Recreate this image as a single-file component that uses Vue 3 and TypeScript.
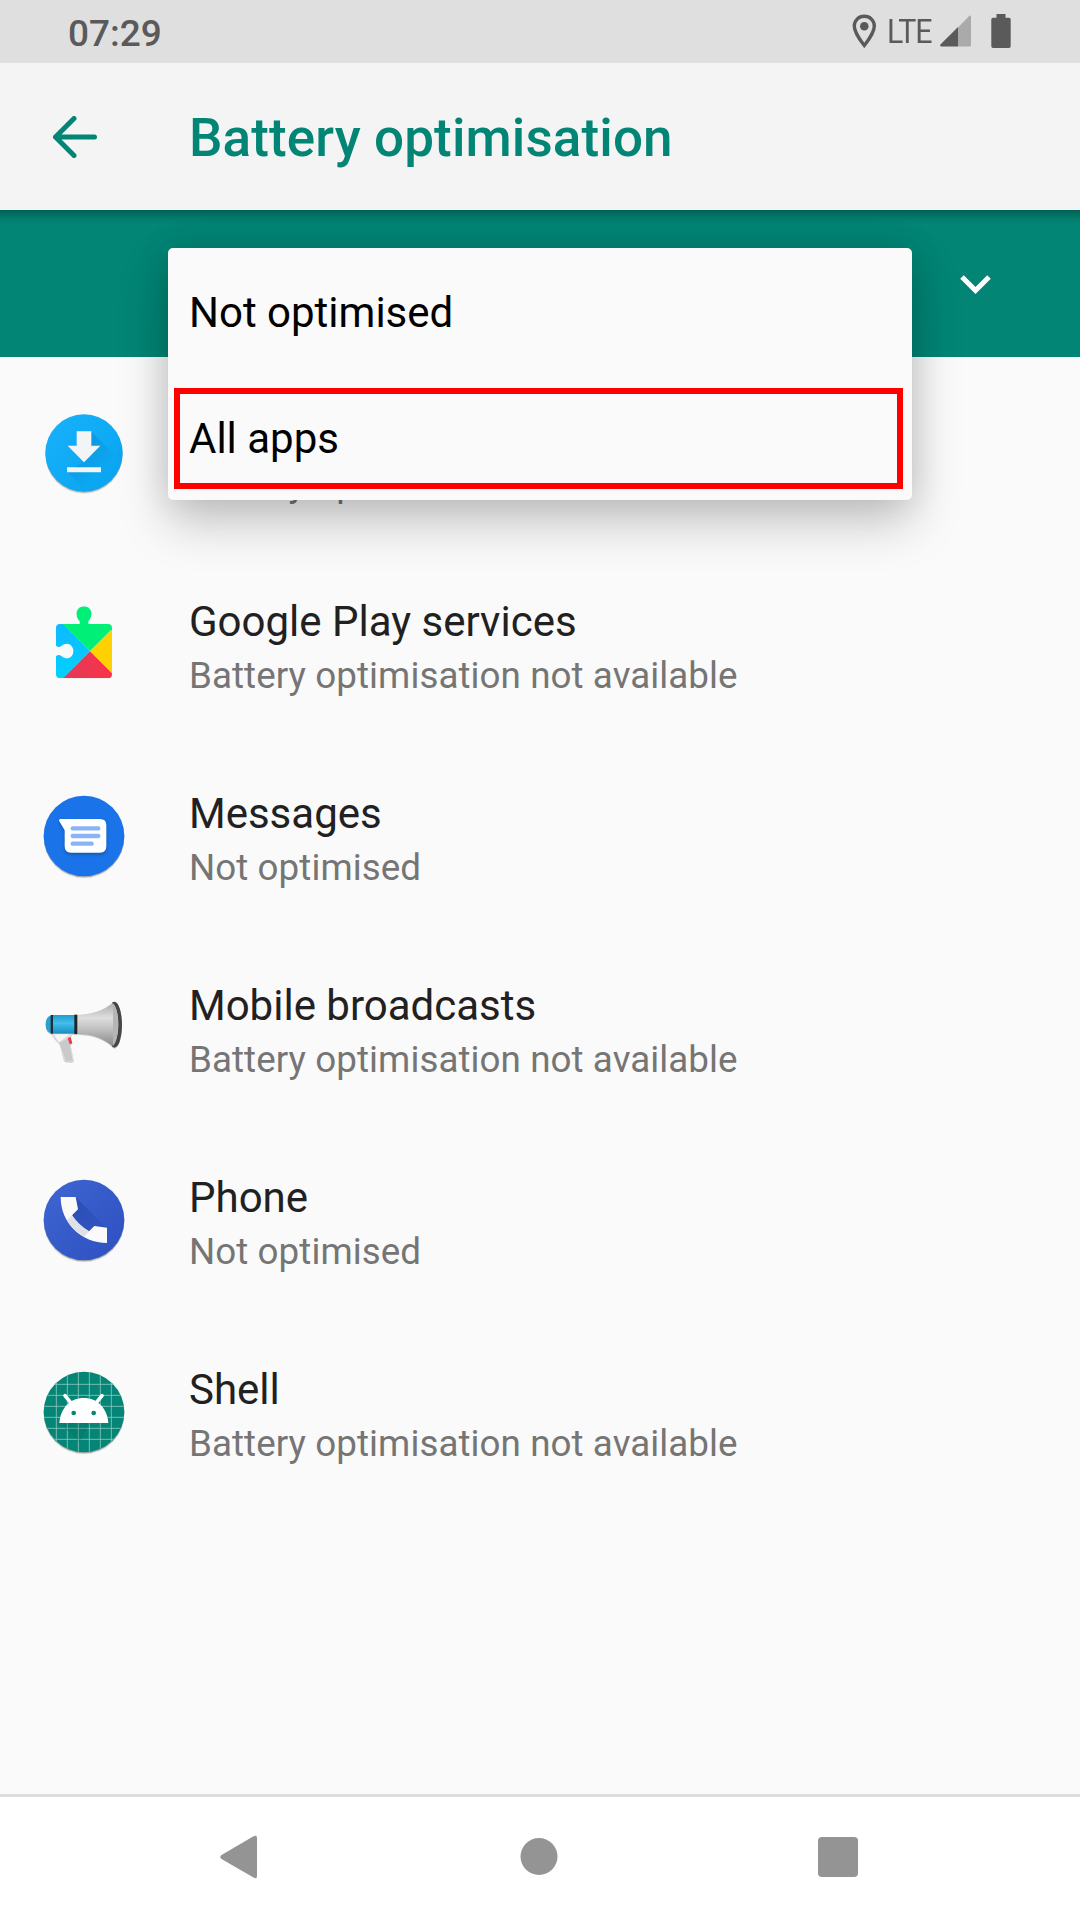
<script setup lang="ts">
interface AppRow {
  icon: 'download' | 'play' | 'messages' | 'broadcast' | 'phone' | 'shell'
  title: string
  status: string
}

const unavailable = 'Battery optimisation not available'

const rows: AppRow[] = [
  { icon: 'download', title: '', status: unavailable },
  { icon: 'play', title: 'Google Play services', status: unavailable },
  { icon: 'messages', title: 'Messages', status: 'Not optimised' },
  { icon: 'broadcast', title: 'Mobile broadcasts', status: unavailable },
  { icon: 'phone', title: 'Phone', status: 'Not optimised' },
  { icon: 'shell', title: 'Shell', status: unavailable },
]
</script>

<template>
  <div class="screen">
    <header class="status-bar">
      <span class="clock">07:29</span>
      <div class="status-icons">
        <svg class="pin" width="24" height="34" viewBox="0 0 24 34">
          <path d="M12.300 2.300C6.600 2.300 2.300 6.600 2.300 12C2.300 19 12.300 31.500 12.300 31.500C12.300 31.500 22.300 19 22.300 12C22.300 6.600 18 2.300 12.300 2.300Z" fill="none" stroke="#5a5a5a" stroke-width="3.400" />
          <circle cx="12.300" cy="12.300" r="4.300" fill="#5a5a5a" />
        </svg>
        <span class="lte">LTE</span>
        <svg class="signal" width="31" height="32" viewBox="0 0 31 32">
          <path d="M18 12.500L29 1.200Q31 -.3 31 2V30Q31 31.500 29.500 31.500H18Z" fill="#aaa" />
          <path d="M18 12V31.500H1.500Q-.8 31.200 .7 29.200Z" fill="#5a5a5a" />
        </svg>
        <svg class="battery" width="20" height="34" viewBox="0 0 20 34">
          <path d="M5.500 0H14.500V3.700H18Q19.700 3.700 19.700 5.400V32.300Q19.700 34 18 34H2Q.3 34 .3 32.300V5.400Q.3 3.700 2 3.700H5.500Z" fill="#5a5a5a" />
        </svg>
      </div>
    </header>

    <div class="app-bar">
      <svg class="back" width="46" height="42" viewBox="0 0 46 42">
        <path d="M22 2.500L3.500 21L22 39.500M3.500 21H42.500" fill="none" stroke="#028575" stroke-width="5" stroke-linecap="round" stroke-linejoin="round" />
      </svg>
      <h1>Battery optimisation</h1>
    </div>

    <div class="filter-bar">
      <svg class="chevron" width="32" height="20" viewBox="0 0 32 20">
        <path d="M2 2L15.500 15.500L29 2" fill="none" stroke="#fff" stroke-width="5" />
      </svg>
      <div class="menu">
        <div class="menu-item">Not optimised</div>
        <div class="menu-item">All apps<span class="marker"></span></div>
      </div>
    </div>

    <main class="list">
      <div v-for="row in rows" :key="row.icon" class="row">
        <svg v-if="row.icon === 'download'" class="icon" viewBox="0 -6 330 330">
          <defs>
            <linearGradient id="dl" x1="0" y1="0" x2="1" y2="1"><stop stop-color="#18b2fb" /><stop offset="1" stop-color="#08a3ef" /></linearGradient>
            <linearGradient id="dls" gradientUnits="userSpaceOnUse" x1="160" y1="150" x2="220" y2="210"><stop stop-color="#0680c0" stop-opacity=".4" /><stop offset="1" stop-color="#0680c0" stop-opacity="0" /></linearGradient>
            <clipPath id="dlc"><circle cx="162" cy="159" r="116" /></clipPath>
          </defs>
          <circle class="cast" cx="162" cy="159" r="116" fill="url(#dl)" />
          <path d="M184 95L300 211V300H198L112 215L160 187Z" fill="url(#dls)" clip-path="url(#dlc)" />
          <path d="M140 94H184V137H211L162 187L113 137H140ZM111 202H213V217H111Z" fill="#f3f4f5" />
        </svg>

        <svg v-else-if="row.icon === 'play'" class="icon" viewBox="0 0 330 330">
          <defs>
            <clipPath id="puzzle"><path d="M90 102H149V94C132 76 139 49 162 49C185 49 192 76 175 94V102H234Q246 102 246 114V253Q246 265 234 265H90Q78 265 78 253V199Q86 191 94 198C111 213 130 202 130 183C130 164 111 153 94 168Q86 175 78 167V114Q78 102 90 102Z" /></clipPath>
            <linearGradient id="pb" x1="0" y1="0" x2="0" y2="1"><stop stop-color="#11b4ff" /><stop offset="1" stop-color="#00d4ff" /></linearGradient>
            <linearGradient id="pr" x1="0" y1="0" x2="1" y2="0"><stop stop-color="#e03a5c" /><stop offset="1" stop-color="#fb3344" /></linearGradient>
          </defs>
          <g clip-path="url(#puzzle)">
            <path d="M70 73L180 184L90 275H70Z" fill="url(#pb)" />
            <path d="M70 40H260V104L180 184L94 99Z" fill="#00ef76" />
            <path d="M260 104V264L180 184Z" fill="#ffd100" />
            <path d="M180 184L260 264V275H89Z" fill="url(#pr)" />
          </g>
        </svg>

        <svg v-else-if="row.icon === 'messages'" class="icon" viewBox="0 6 330 330">
          <circle class="cast" cx="162" cy="168" r="121" fill="#1a73e8" />
          <path class="soft" d="M92 117H210Q229 117 229 136V199Q229 218 210 218H123Q104 218 104 199V151L88 124Q85 117 92 117Z" fill="#fff" />
          <path d="M128 145H205M128 168H205M128 191H185" stroke="#8ab4f8" stroke-width="13" stroke-linecap="round" />
        </svg>

        <svg v-else-if="row.icon === 'broadcast'" class="icon" viewBox="0 -18 330 330">
          <defs>
            <linearGradient id="horn" x1="0" y1="0" x2="0" y2="1"><stop stop-color="#aaa" /><stop offset=".35" stop-color="#dedede" /><stop offset=".6" stop-color="#c0c0c0" /><stop offset="1" stop-color="#858585" /></linearGradient>
            <linearGradient id="body" x1="0" y1="0" x2="0" y2="1"><stop stop-color="#209cd0" /><stop offset=".45" stop-color="#43bdec" /><stop offset="1" stop-color="#168ec2" /></linearGradient>
          </defs>
          <g class="faint">
            <path d="M65 161H126L119 181L131 239Q132 245 126 245L107 244Q103 243 101 238L89 190Q75 180 65 161Z" fill="#dedede" />
            <path d="M72 163H119L86 187Z" fill="#f5f5f5" />
            <path d="M88 188L116 174L128 242L107 242Z" fill="#c9c9c9" />
            <path d="M113 174L122 171L127 190L119 193Z" fill="#f2384d" />
            <path d="M66 105Q47 109 47 133Q47 157 66 161Z" fill="#2b9fce" />
            <path d="M68 105H135V161H68Z" fill="url(#body)" />
            <path d="M62 105H69V161H62Z" fill="#1d3039" />
            <path d="M142 105C188 103 220 92 250 67V201C220 173 188 163 142 161Z" fill="url(#horn)" />
            <path d="M133 104H142V162H133Z" fill="#202427" />
            <path d="M246 68C253 61 264 65 270 88C278 116 278 155 270 181C264 203 253 207 246 199C260 187 265 160 265 133C265 106 260 80 246 68Z" fill="#464646" />
            <path d="M249 70Q264 85 264 133Q264 182 249 198Z" fill="#b5b5b5" />
          </g>
        </svg>

        <svg v-else-if="row.icon === 'phone'" class="icon" viewBox="0 3 330 330">
          <defs>
            <linearGradient id="ph" x1="0" y1="0" x2="1" y2="1"><stop stop-color="#3f66d2" /><stop offset="1" stop-color="#2d50c0" /></linearGradient>
            <linearGradient id="phs" gradientUnits="userSpaceOnUse" x1="150" y1="120" x2="245" y2="215"><stop stop-color="#213f9f" stop-opacity=".5" /><stop offset="1" stop-color="#213f9f" stop-opacity="0" /></linearGradient>
            <clipPath id="phc"><circle cx="162" cy="165" r="121" /></clipPath>
          </defs>
          <circle class="cast" cx="162" cy="165" r="121" fill="url(#ph)" />
          <path d="M137 96L300 259V300H297L231 234L177 200L126 151L144 133Z" fill="url(#phs)" clip-path="url(#phc)" />
          <path d="M92 96H137L144 133L126 151Q146 182 177 199L193 183L231 188V234C154 234 92 174 92 96Z" fill="#fafafa" />
          <path d="M126 151Q146 182 177 199L162 215Q128 196 111 166Z" fill="#dfe1e6" />
        </svg>

        <svg v-else class="icon" viewBox="0 9 330 330">
          <defs><clipPath id="sh"><circle cx="162" cy="171" r="121" /></clipPath></defs>
          <circle class="cast" cx="162" cy="171" r="121" fill="#058575" />
          <g clip-path="url(#sh)">
            <path d="M79 40V300M112 40V300M145 40V300M178 40V300M211 40V300M244 40V300M30 88H300M30 121H300M30 154H300M30 187H300M30 220H300M30 253H300" stroke="#8cc8bf" stroke-width="2.500" />
            <path d="M88 204H180L150 262Z" fill="#046a5e" opacity=".25" />
          </g>
          <path d="M88 204C91 160 120 129 161 129C202 129 232 160 235 204Z" fill="#fff" />
          <path d="M105 122L124 145M216 122L197 145" stroke="#fff" stroke-width="11" stroke-linecap="round" />
          <circle cx="131" cy="174" r="7" fill="#058575" />
          <circle cx="191" cy="174" r="7" fill="#058575" />
        </svg>

        <div class="text">
          <div class="title">{{ row.title }}</div>
          <div class="sub">{{ row.status }}</div>
        </div>
      </div>
    </main>

    <nav class="nav-bar">
      <svg width="38" height="44" viewBox="0 0 38 44"><path d="M33.500 1.200Q37 -.5 37 3V41Q37 44.500 33.500 42.500L1.500 24Q-1 22 1.500 20Z" fill="#949494" /></svg>
      <svg width="40" height="38" viewBox="0 0 40 38"><circle cx="21" cy="18.500" r="18.500" fill="#949494" /></svg>
      <svg width="40" height="40" viewBox="0 0 40 40"><rect width="40" height="40" rx="4" fill="#949494" /></svg>
    </nav>
  </div>
</template>

<style>
body {
  margin: 0;
}
</style>

<style scoped>
.screen {
  width: 1080px;
  height: 1920px;
  display: flex;
  flex-direction: column;
  background: #fafafa;
  font-family: Roboto, "Noto Sans", sans-serif;
  overflow: hidden;
}

svg {
  display: block;
  flex: none;
}

.status-bar {
  box-sizing: border-box;
  height: 63px;
  padding: 0 69px 0 68px;
  display: flex;
  justify-content: space-between;
  background: #dfdfdf;
  color: #5a5a5a;
}

.clock {
  padding-top: 2px;
  line-height: 63px;
  font-size: 37px;
  font-weight: 500;
}

.status-icons {
  display: flex;
  align-items: flex-start;
}

.pin {
  margin: 14px 11px 0 0;
}

.lte {
  width: 53px;
  font-size: 33px;
  line-height: 63px;
  letter-spacing: -1.2px;
  transform: scaleX(0.92);
  transform-origin: left;
}

.signal {
  margin-top: 15px;
}

.battery {
  margin: 14px 0 0 20px;
}

.app-bar {
  box-sizing: border-box;
  height: 147px;
  padding-left: 52px;
  display: flex;
  align-items: center;
  background: #f4f4f4;
}

h1 {
  margin: 3px 0 0 91px;
  font-size: 53px;
  font-weight: 500;
  line-height: 62px;
  letter-spacing: 0.12px;
  color: #028575;
}

.filter-bar {
  box-sizing: border-box;
  position: relative;
  z-index: 2;
  height: 147px;
  padding: 65px 88px 0 0;
  display: flex;
  justify-content: flex-end;
  background: #028575;
}

.filter-bar::before {
  content: "";
  position: absolute;
  inset: 0 0 auto;
  height: 14px;
  background: linear-gradient(rgba(0, 0, 0, 0.27), rgba(0, 0, 0, 0.08) 60%, rgba(0, 0, 0, 0));
}

.menu {
  position: absolute;
  left: 168px;
  top: 38px;
  box-sizing: border-box;
  width: 744px;
  height: 252px;
  padding-top: 2px;
  background: #fafafa;
  border-radius: 5px;
  box-shadow: 0 22px 50px rgba(0, 0, 0, 0.22), 0 0 34px rgba(0, 0, 0, 0.1);
}

.menu-item {
  position: relative;
  height: 126px;
  padding-left: 21px;
  font-size: 42px;
  line-height: 126px;
  color: #000;
}

.marker {
  position: absolute;
  left: 6px;
  top: 12px;
  box-sizing: border-box;
  width: 729px;
  height: 101px;
  border: 6px solid #f00;
}

.list {
  flex: 1;
}

.row {
  height: 192px;
  padding-left: 30px;
  display: flex;
}

.icon {
  width: 110px;
  height: 110px;
  margin: 41px 49px 0 0;
}

.cast {
  filter: drop-shadow(0 4px 2px rgba(0, 0, 0, 0.3));
}

.soft {
  filter: drop-shadow(0 5px 4px rgba(0, 0, 0, 0.25));
}

.faint {
  filter: drop-shadow(0 3px 2px rgba(0, 0, 0, 0.2));
}

.text {
  padding-top: 47px;
  white-space: nowrap;
}

.title {
  height: 52px;
  font-size: 42px;
  line-height: 52px;
  color: #212121;
}

.sub {
  margin-top: 4px;
  font-size: 36.75px;
  line-height: 48px;
  letter-spacing: 0.07px;
  color: #757575;
}

.nav-bar {
  box-sizing: border-box;
  height: 126px;
  padding: 0 222px 4px 220px;
  display: flex;
  align-items: center;
  justify-content: space-between;
  background: #fff;
  border-top: 3px solid #dcdcdc;
}
</style>
